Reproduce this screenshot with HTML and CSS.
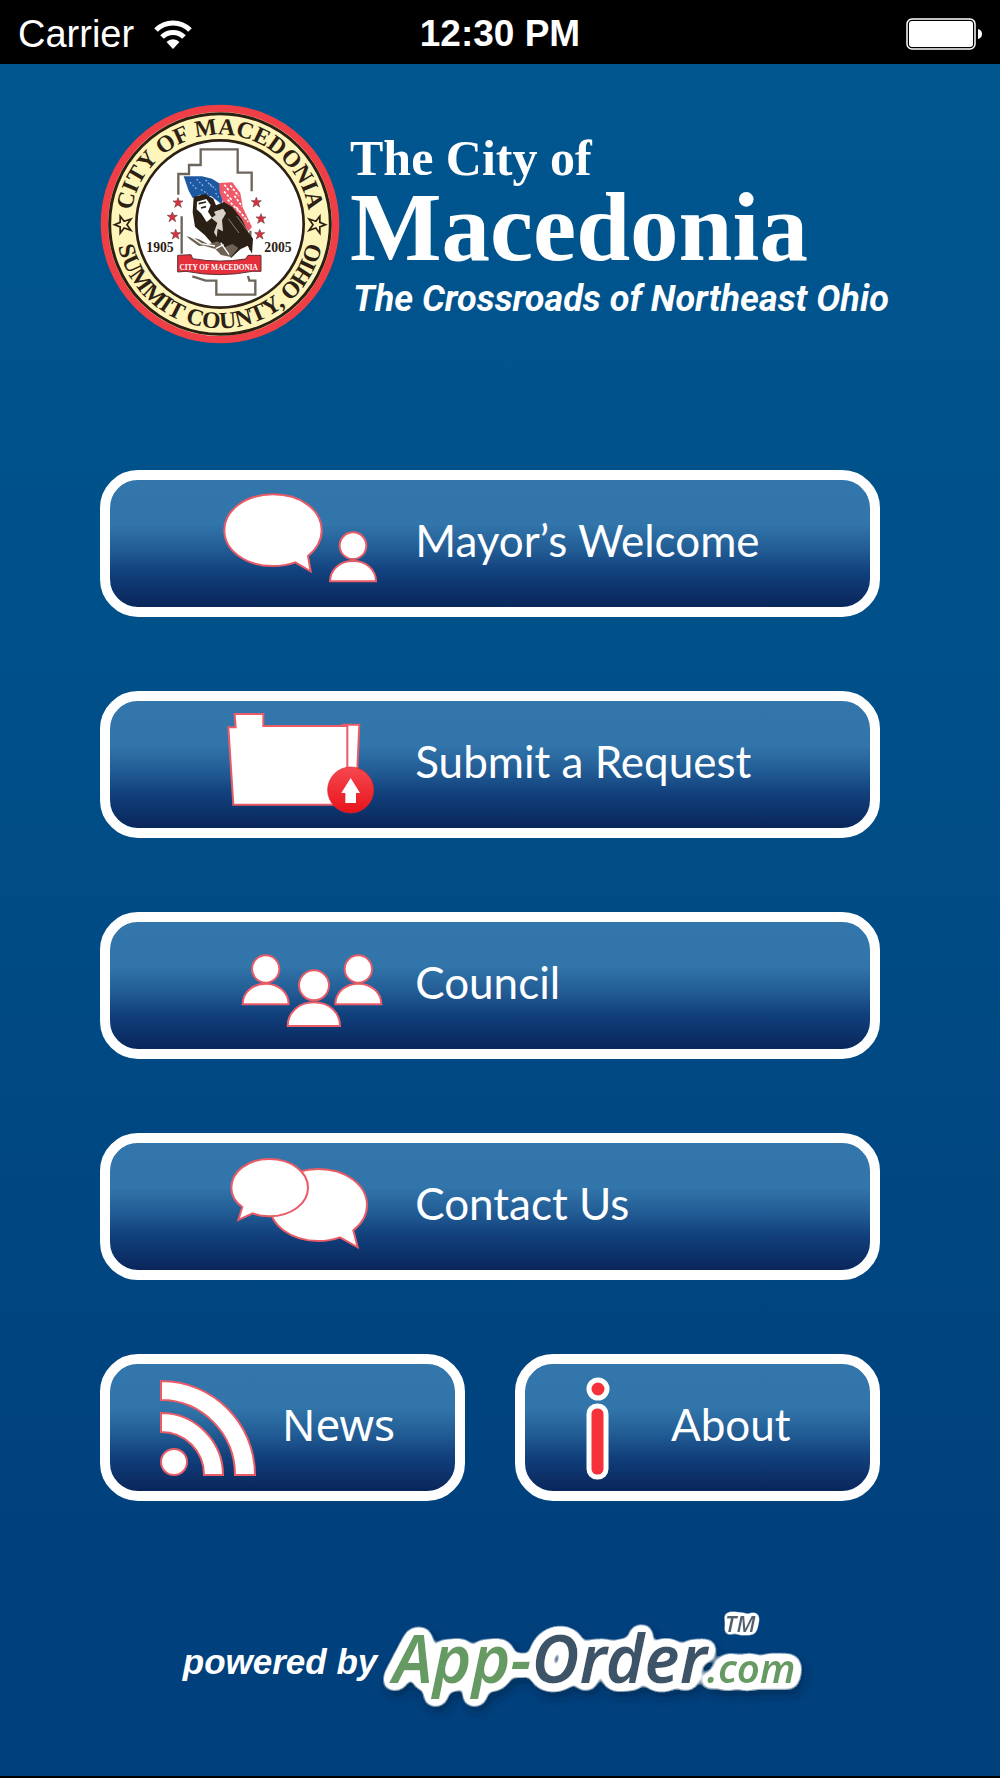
FILE: index.html
```html
<!DOCTYPE html>
<html lang="en">
<head>
    <meta charset="UTF-8">
    <meta name="viewport" content="width=device-width, initial-scale=1.0">
    <title>The City of Macedonia</title>
    <link rel="stylesheet" href="styles.css">
</head>
<body>
    <!-- Status Bar -->
    <div class="status-bar">
        <div class="carrier">
            <span>Carrier</span>
            <svg class="wifi" viewBox="0 0 38 29" aria-hidden="true">
                <path d="M2 10a24 24 0 0 1 34 0" fill="none" stroke="#fff" stroke-width="5"/>
                <path d="M8 17a15.500 15.500 0 0 1 22 0" fill="none" stroke="#fff" stroke-width="5"/>
                <path d="M19 29l-6.500-7a9 9 0 0 1 13 0z" fill="#fff"/>
            </svg>
        </div>
        <div class="time">12:30 PM</div>
        <svg class="battery" viewBox="0 0 76 32" aria-hidden="true">
            <rect x="1" y="1" width="68" height="30" rx="5" fill="none" stroke="#fff" stroke-width="1.500"/>
            <rect x="3" y="3" width="64" height="26" rx="3" fill="#fff"/>
            <path d="M72 11q4 1 4 5t-4 5z" fill="#fff"/>
        </svg>
    </div>

    <!-- Logo -->
    <header class="header">
        <svg class="seal" viewBox="33 28 720 720" role="img" aria-label="City seal">
            <defs>
                <path id="arc-top" d="M125 388a268 268 0 0 1 536 0"/>
                <path id="arc-bottom" d="M80 388a313 313 0 0 0 626 0"/>
                <path id="star" d="M0-15l4 10h11l-9 7 4 12-10-7-10 7 4-12-9-7h11z"/>
            </defs>
            <circle cx="393" cy="388" r="347" fill="#fdf5b9" stroke="#ef3e46" stroke-width="22"/>
            <circle cx="393" cy="388" r="331" fill="none" stroke="#2b2013" stroke-width="9"/>
            <circle cx="393" cy="388" r="251" fill="#fff" stroke="#2b2013" stroke-width="8"/>
            <g class="seal-ring">
                <text><textPath href="#arc-top" startOffset="50%">CITY OF MACEDONIA</textPath></text>
                <text><textPath href="#arc-bottom" startOffset="50%">SUMMIT COUNTY, OHIO</textPath></text>
            </g>
            <g fill="#fdf5b9" stroke="#2b2013" stroke-width="3">
                <use href="#star" transform="translate(102 390) rotate(-90) scale(1.700)"/>
                <use href="#star" transform="translate(684 390) rotate(90) scale(1.700)"/>
            </g>
            <!-- county outline -->
            <g fill="none" stroke="#6d655b" stroke-width="7">
                <path d="M268 300v-62h32v-27h35v-47h111v70h42v56"/>
                <path d="M278 365v112M310 545l40 13h32v42h117v-42h-18l-4-14M484 408v58"/>
            </g>
            <!-- flag and settler -->
            <path d="M284 245l55 0 30 7 26 17 10 35-8 24-30-23-34-5-22 10-12-22z" fill="#1c59a2"/>
            <path d="M390 265l40-2 24 32 8 45 27 57-11 13-29-39-47-48-10-30z" fill="#ef5a68"/>
            <path d="M406 270l14 18m-15 2l24 27m-5-45l25 32m-33 11l36 37m-16-49l24 33m-18 2l36 44" fill="none" stroke="#fff" stroke-width="5" stroke-dasharray="8 5"/>
            <path d="M303 263l20 20m0-29l22 22m5-20l18 20m-32 9l20 12m7-29l18 17m-1 10l12 18" fill="none" stroke="#91b6d8" stroke-width="4" stroke-dasharray="5 6"/>
            <path d="M314 306l35-8 24 14 8 20 24-10 25 15 28 36 19 38 15 21-3 45-13-24-22 11-28 26-17-25-31-9-31-35-29-25-7-43z" fill="#2b2015"/>
            <path d="M324 321l28-8 13 18-8 20 12 18-16 13-17-26-13-12z" fill="#fff"/>
            <path d="M375 351l27-9 9 14-12 20 3 34-16-8-3 25-8-14 10-28-18-15 13-9z" fill="#d8d2c8"/>
            <path d="M418 372l32 43m-7-51l33 45" fill="none" stroke="#8a7e70" stroke-width="3"/>
            <path d="M329 327l22-5m-15 18l15-4m-17 24l10 12" stroke="#2b2015" stroke-width="5"/>
            <path d="M292 425l38 9 32 17-32 3-25-18zM345 453l41-13 20 18 24-10 18 12-22 27-30-6-17-18z" fill="#6d6253"/>
            <path d="M300 422l36 25 42 7m17-10l25 36m-40-18l24-12" fill="none" stroke="#fff" stroke-width="4"/>
            <g fill="#d9303b" stroke="#71434a" stroke-width="2">
                <use href="#star" x="267" y="324"/>
                <use href="#star" x="250" y="367"/>
                <use href="#star" x="260" y="419"/>
                <use href="#star" x="502" y="323"/>
                <use href="#star" x="516" y="372"/>
                <use href="#star" x="512" y="419"/>
            </g>
            <text class="seal-year" x="213" y="472">1905</text>
            <text class="seal-year" x="567" y="472">2005</text>
            <path d="M266 482l40-2 5 12q80 14 159 1l7-11 39 0v48l-26 0q-100 20-199 0l-25 2z" fill="#e52f3a" stroke="#5f3134" stroke-width="3"/>
            <text class="seal-ribbon" x="389" y="525">CITY OF MACEDONIA</text>
        </svg>
        <div class="title">
            <div class="title-small">The City of</div>
            <h1>Macedonia</h1>
            <div class="tagline">The Crossroads of Northeast Ohio</div>
        </div>
    </header>

    <!-- Menu -->
    <nav class="menu">
        <a href="#mayor" class="menu-button">
            <svg class="icon" viewBox="390 60 510 381" aria-hidden="true">
                <path d="M552 103c82 0 146 46 146 108 0 32-15 56-41 77l8 46-46-27c-20 7-42 11-67 11-82 0-146-46-146-107s64-108 146-108z"/>
                <circle cx="792" cy="257" r="40"/>
                <path d="M723 364c0-36 30-61 69-61s69 25 69 61z"/>
            </svg>
            <span>Mayor’s Welcome</span>
        </a>
        <a href="#request" class="menu-button">
            <svg class="icon" viewBox="390 66 510 381" aria-hidden="true">
                <defs>
                    <linearGradient id="red-fill" x1="0" y1="0" x2="0" y2="1">
                        <stop offset="0" stop-color="#f5484f"/>
                        <stop offset="1" stop-color="#e9131b"/>
                    </linearGradient>
                </defs>
                <path d="M760 137h51l-11 240h-50z"/>
                <path d="M437 105h86v36h252v236H433L418 145h22z"/>
                <circle class="red" cx="785" cy="333" r="69"/>
                <path class="plain" d="M785 297l28 45h-12v30h-32v-30h-12z"/>
            </svg>
            <span>Submit a Request</span>
        </a>
        <a href="#council" class="menu-button">
            <svg class="icon" viewBox="390 72 510 381" aria-hidden="true">
                <circle cx="530" cy="213" r="41"/>
                <path d="M461 319c0-36 30-62 69-62s69 26 69 62z"/>
                <circle cx="808" cy="213" r="41"/>
                <path d="M739 319c0-36 30-62 69-62s69 26 69 62z"/>
                <circle cx="675" cy="262" r="45"/>
                <path d="M596 384c0-42 34-71 79-71s78 29 78 71z"/>
            </svg>
            <span>Council</span>
        </a>
        <a href="#contact" class="menu-button">
            <svg class="icon" viewBox="390 68 510 381" aria-hidden="true">
                <path d="M688 146c82 0 146 48 146 109 0 31-15 55-41 75l13 51-53-30c-20 7-40 11-65 11-82 0-146-48-146-108s64-108 146-108z"/>
                <path d="M541 116c65 0 116 38 116 86s-51 86-116 86c-18 0-35-3-50-9l-43 20 12-39c-21-15-33-35-33-58 0-48 49-86 114-86z"/>
            </svg>
            <span>Contact Us</span>
        </a>
        <div class="menu-row">
            <a href="#news" class="menu-button news">
                <svg class="icon" viewBox="0 0 96 96" aria-hidden="true">
                    <path class="thin" d="M1 1c52 0 94 42 94 94H75C75 54 42 20 1 20z"/>
                    <path class="thin" d="M1 33c34 0 62 28 62 62H44C44 71 25 52 1 52z"/>
                    <circle class="thin" cx="14" cy="82" r="13"/>
                </svg>
                <span>News</span>
            </a>
            <a href="#about" class="menu-button about">
                <svg class="icon" viewBox="0 0 26 104" aria-hidden="true">
                    <circle class="info" cx="13" cy="13" r="9"/>
                    <rect class="info" x="4" y="30" width="17" height="71" rx="8"/>
                </svg>
                <span>About</span>
            </a>
        </div>
    </nav>

    <!-- Footer -->
    <footer class="footer">
        <span class="powered">powered by</span>
        <svg class="app-order" viewBox="0 0 440 110" role="img" aria-label="App-Order.com">
            <defs>
                <filter id="outline" x="-8%" y="-30%" width="116%" height="160%">
                    <feGaussianBlur in="SourceAlpha" stdDeviation="6"/>
                    <feComponentTransfer result="edge">
                        <feFuncR type="linear" slope="0" intercept="1"/>
                        <feFuncG type="linear" slope="0" intercept="1"/>
                        <feFuncB type="linear" slope="0" intercept="1"/>
                        <feFuncA type="linear" slope="28" intercept="-1"/>
                    </feComponentTransfer>
                    <feDropShadow in="edge" dx="3" dy="6" stdDeviation="4" flood-color="#001d40" flood-opacity="0.500" result="base"/>
                    <feMerge>
                        <feMergeNode in="base"/>
                        <feMergeNode in="SourceGraphic"/>
                    </feMerge>
                </filter>
                <filter id="outline-small" x="-30%" y="-30%" width="160%" height="160%">
                    <feGaussianBlur in="SourceAlpha" stdDeviation="3"/>
                    <feComponentTransfer result="edge">
                        <feFuncR type="linear" slope="0" intercept="1"/>
                        <feFuncG type="linear" slope="0" intercept="1"/>
                        <feFuncB type="linear" slope="0" intercept="1"/>
                        <feFuncA type="linear" slope="20" intercept="-1"/>
                    </feComponentTransfer>
                    <feMerge>
                        <feMergeNode in="edge"/>
                        <feMergeNode in="SourceGraphic"/>
                    </feMerge>
                </filter>
            </defs>
            <text class="brand" x="16" y="76" filter="url(#outline)"><tspan class="green">App-</tspan><tspan class="slate">Order</tspan><tspan class="green dot-com">.com</tspan></text>
            <text class="tm" x="348" y="25" filter="url(#outline-small)">TM</text>
        </svg>
    </footer>
</body>
</html>
```

FILE: styles.css
```css
* {
    box-sizing: border-box;
}

body {
    margin: 0;
    min-height: 100vh;
    display: flex;
    flex-direction: column;
    font-family: "Liberation Sans", Arial, sans-serif;
    color: #fff;
    background: linear-gradient(#005790, #004f88 40%, #00407c 90%);
    border-bottom: 2px solid #000;
}

/* Status Bar */
.status-bar {
    display: grid;
    grid-template-columns: 1fr auto 1fr;
    align-items: center;
    height: 64px;
    padding: 4px 18px 0;
    background-color: #000;
    font-size: 37px;
}

.carrier {
    display: flex;
    align-items: center;
    gap: 20px;
    font-size: 38px;
}

.wifi {
    width: 38px;
    height: 29px;
}

.time {
    font-weight: bold;
}

.battery {
    width: 76px;
    height: 32px;
    justify-self: end;
}

/* Logo */
.header {
    display: flex;
    align-items: center;
    gap: 10px;
    padding: 40px 10% 0;
}

.seal {
    flex: none;
    width: 240px;
    height: 240px;
}

.seal text {
    font-family: "Liberation Serif", Georgia, serif;
    font-weight: bold;
    text-anchor: middle;
    fill: #2b2013;
}

.seal-ring text {
    font-size: 71px;
}

.seal .seal-year {
    font-size: 41px;
}

.seal .seal-ribbon {
    font-size: 22px;
    fill: #fff;
}

.title {
    padding-top: 10px;
    font-family: "Liberation Serif", Georgia, serif;
    font-weight: bold;
    white-space: nowrap;
}

.title-small {
    font-size: 50px;
    line-height: 52px;
}

.title h1 {
    margin: 0;
    font-size: 97px;
    line-height: 88px;
}

.tagline {
    font-family: Roboto, "Liberation Sans", Arial, sans-serif;
    font-size: 36px;
    font-style: italic;
    line-height: 54px;
    padding-left: 3px;
}

/* Menu */
.menu {
    display: flex;
    flex-direction: column;
    gap: 74px;
    padding: 126px 12% 0 10%;
}

.menu-button {
    display: flex;
    align-items: center;
    gap: 26px;
    padding: 0 0 0 14%;
    border: 10px solid #fff;
    border-radius: 38px;
    background: linear-gradient(#3276ab, #3175aa 35%, #225c95 55%, #11407c 73%, #0a265b) padding-box;
    color: #fff;
    font-family: Lato, "Noto Sans", sans-serif;
    font-size: 44px;
    line-height: 120px;
    text-decoration: none;
    white-space: nowrap;
}

.menu-button:hover {
    filter: brightness(1.1);
}

.menu-button span {
    padding-bottom: 7px;
}

.icon {
    flex: none;
    width: 170px;
    height: 127px;
    fill: #fff;
    stroke: #e95b66;
    stroke-width: 6;
}

.icon .red {
    fill: url(#red-fill);
    stroke: #d9232c;
    stroke-width: 2;
}

.icon .plain {
    stroke: none;
}

.icon .thin {
    stroke-width: 2;
}

.icon .info {
    fill: #f7313a;
    stroke: #fff;
    stroke-width: 5;
}

.menu-row {
    display: grid;
    grid-template-columns: 1fr 1fr;
    gap: 50px;
}

.menu-row .menu-button {
    height: 147px;
}

.news {
    padding-left: 50px;
    font-family: "Noto Sans", sans-serif;
}

.news .icon {
    width: 96px;
    height: 96px;
}

.about {
    gap: 60px;
    padding-left: 60px;
}

.about .icon {
    width: 26px;
    height: 104px;
}

/* Footer */
.footer {
    display: flex;
    align-items: center;
    justify-content: center;
    padding: 106px 0 50px;
}

.powered {
    font-size: 35px;
    font-style: italic;
    font-weight: bold;
}

.app-order {
    width: 440px;
    height: 110px;
    overflow: visible;
}

.app-order text {
    font-family: "Noto Sans", sans-serif;
    font-style: italic;
    font-weight: 600;
}

.app-order .brand {
    font-size: 66px;
}

.app-order .dot-com {
    font-size: 40px;
}

.app-order .tm {
    font-size: 22px;
    fill: #52606d;
}

.green {
    fill: #659b63;
}

.slate {
    fill: #3c5368;
}
```
